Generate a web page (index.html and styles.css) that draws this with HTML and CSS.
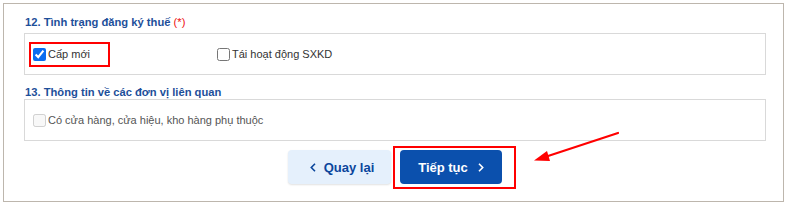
FILE: index.html
```html
<!DOCTYPE html>
<html lang="vi">
<head>
<meta charset="utf-8">
<link rel="stylesheet" href="styles.css">
</head>
<body>
<div class="frame">
  <div class="heading h12">12. Tình trạng đăng ký thuế <span class="req">(*)</span></div>
  <div class="box">
    <div class="options">
      <label class="opt hl"><input type="checkbox" checked><span>Cấp mới</span></label>
      <label class="opt"><input type="checkbox"><span>Tái hoạt động SXKD</span></label>
    </div>
  </div>
  <div class="heading h13">13. Thông tin về các đơn vị liên quan</div>
  <div class="box">
    <label class="opt disabled"><input type="checkbox" disabled><span>Có cửa hàng, cửa hiệu, kho hàng phụ thuộc</span></label>
  </div>
  <div class="actions">
    <button class="btn back"><svg width="6" height="9" viewBox="0 0 6 9"><path d="M5 0.8 L1.3 4.5 L5 8.2" fill="none" stroke="currentColor" stroke-width="1.6"/></svg><span>Quay lại</span></button>
    <button class="btn next hl2"><span>Tiếp tục</span><svg width="6" height="9" viewBox="0 0 6 9"><path d="M1 0.8 L4.7 4.5 L1 8.2" fill="none" stroke="currentColor" stroke-width="1.6"/></svg></button>
  </div>
  <svg class="arrow" width="100" height="40" viewBox="0 0 100 40">
    <line x1="97" y1="3" x2="24" y2="27" stroke="#ff0000" stroke-width="2.2" stroke-linecap="round"/>
    <polygon points="13,30.5 26,21 29,31" fill="#ff0000"/>
  </svg>
</div>
</body>
</html>
```
FILE: styles.css
```css
html, body {
  margin: 0;
  padding: 0;
  background: #ffffff;
}
body {
  font-family: "Liberation Sans", Arial, sans-serif;
  font-size: 11px;
  color: #333333;
}
.frame {
  position: relative;
  margin: 3px 0 0 3px;
  width: 781px;
  height: 199px;
  box-sizing: border-box;
  border: 1px solid #bdb6ad;
  padding: 12px 17px 0 20px;
}
.heading {
  font-weight: bold;
  color: #1d4f9a;
  line-height: 13px;
  padding-left: 1px;
  font-size: 11.2px;
}
.h12 { margin-bottom: 4px; }
.h13 { margin-top: 11px; }
.req { color: #ee1111; font-weight: normal; }
.box {
  width: 742px;
  height: 42px;
  box-sizing: border-box;
  border: 1px solid #d9d9d9;
  display: flex;
  align-items: center;
  padding-left: 8px;
}
.options {
  display: grid;
  grid-template-columns: 184px auto;
  align-items: center;
}
.opt {
  display: flex;
  align-items: center;
  gap: 2px;
  line-height: 13px;
  width: max-content;
}
.opt input {
  margin: 0;
  width: 13px;
  height: 13px;
  accent-color: #0a6cf0;
}
.opt.disabled { color: #555555; }
.hl { position: relative; }
.hl::after {
  content: "";
  position: absolute;
  left: -4px;
  top: -6px;
  right: -20px;
  bottom: -6px;
  border: 2px solid #ff0000;
}
.actions {
  width: 742px;
  display: flex;
  justify-content: center;
  gap: 9px;
  margin-top: 9px;
}
.btn {
  height: 34px;
  border: none;
  border-radius: 4px;
  font-family: "Liberation Sans", Arial, sans-serif;
  font-size: 13px;
  font-weight: bold;
  display: flex;
  align-items: center;
  justify-content: center;
  padding: 0;
  box-sizing: border-box;
}
.back {
  width: 103px;
  background: #e5f0fc;
  color: #0b469c;
  gap: 8px;
  padding-left: 5px;
  box-shadow: 0 1px 2px rgba(0, 0, 0, 0.12);
}
.next {
  width: 102px;
  background: #0b50ad;
  color: #ffffff;
  gap: 10px;
}
.hl2 { position: relative; }
.hl2::after {
  content: "";
  position: absolute;
  left: -7px;
  top: -4px;
  right: -14px;
  bottom: -5px;
  border: 2px solid #ff0000;
}
.arrow {
  position: absolute;
  left: 517px;
  top: 126px;
}
```
